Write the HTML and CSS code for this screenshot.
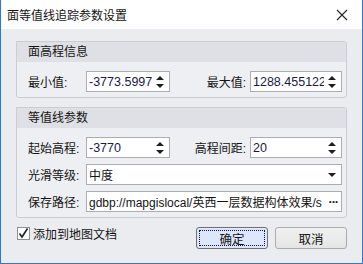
FILE: index.html
```html
<!doctype html>
<html>
<head>
<meta charset="utf-8">
<title>面等值线追踪参数设置</title>
<link rel="stylesheet" href="styles.css">
</head>
<body>
<div class="window">
	<div class="titlebar">
		<span class="title">面等值线追踪参数设置</span>
		<svg class="close" width="12" height="12" viewBox="0 0 12 12"><path d="M1 1L11 11M11 1L1 11" stroke="#222" stroke-width="1.1" fill="none"/></svg>
	</div>
	<div class="content">
		<div class="group">
			<div class="groupHeader">面高程信息</div>
			<div class="groupBody">
				<label class="fieldLabel">最小值:</label>
				<div class="field spin"><span class="value">-3773.5997</span><span class="spinArrows"><i class="up"></i><i class="down"></i></span></div>
				<label class="fieldLabel right">最大值:</label>
				<div class="field spin"><span class="value">1288.455122</span><span class="spinArrows"><i class="up"></i><i class="down"></i></span></div>
			</div>
		</div>
		<div class="group">
			<div class="groupHeader">等值线参数</div>
			<div class="groupBody">
				<label class="fieldLabel">起始高程:</label>
				<div class="field spin"><span class="value">-3770</span><span class="spinArrows"><i class="up"></i><i class="down"></i></span></div>
				<label class="fieldLabel right">高程间距:</label>
				<div class="field spin"><span class="value">20</span><span class="spinArrows"><i class="up"></i><i class="down"></i></span></div>
				<label class="fieldLabel">光滑等级:</label>
				<div class="field wide combo"><span class="value">中度</span><i class="down"></i></div>
				<label class="fieldLabel">保存路径:</label>
				<div class="field wide path"><span class="value">gdbp://mapgislocal/英西一层数据构体效果/s</span><span class="more">···</span></div>
			</div>
		</div>
		<div class="footer">
			<div class="check">
				<svg width="13" height="13" viewBox="0 0 13 13"><rect x="0.5" y="0.5" width="12" height="12" fill="#fff" stroke="#8e8f8f"/><path d="M2.5 6.5L5 10L10.5 1.5" stroke="#222" stroke-width="1.6" fill="none"/></svg>
				<span>添加到地图文档</span>
			</div>
			<div class="buttons">
				<div class="button default"><span>确定</span></div>
				<div class="button"><span>取消</span></div>
			</div>
		</div>
	</div>
</div>
</body>
</html>
```

FILE: styles.css
```css
body {
	margin: 0;
	font-family: "Liberation Sans", "Noto Sans CJK SC", sans-serif;
	font-size: 12px;
	color: rgb(20,20,20);
}

.window {
	width: 361px;
	height: 263px;
	border: 1px solid rgb(43,121,208);
	border-top: none;
	background-color: rgb(235,236,240);
	display: flex;
	flex-direction: column;
}

.titlebar {
	height: 29px;
	background-color: rgb(255,255,255);
	display: flex;
	align-items: center;
	justify-content: space-between;
	padding: 0 14px 0 6px;
}

.title {
	font-size: 12px;
	padding-bottom: 1px;
}

.close {
	margin-top: 1px;
}

.content {
	padding: 12px 15px 0 15px;
	display: flex;
	flex-direction: column;
	gap: 9px;
}

.group {
	border: 1px solid rgb(204,205,210);
	border-radius: 0 3px 3px 3px;
	background-color: rgb(238,239,242);
}

.groupHeader {
	height: 20px;
	line-height: 20px;
	padding-left: 11px;
	background-color: rgb(223,224,229);
}

.groupBody {
	display: grid;
	grid-template-columns: 58px 84px 1fr 92px;
	row-gap: 6px;
	padding: 9px 4px 5px 11px;
	align-items: center;
}

.fieldLabel {
	white-space: nowrap;
}

.fieldLabel.right {
	text-align: right;
	padding-right: 4px;
}

.field {
	height: 19px;
	border: 1px solid rgb(171,173,179);
	background-color: rgb(255,255,255);
	display: flex;
	align-items: center;
	padding: 0 3px 0 2px;
	overflow: hidden;
	font-size: 12.5px;
	color: rgb(26,26,70);
}

.field .value {
	flex: 1;
	min-width: 0;
	margin-right: 4px;
	white-space: nowrap;
	overflow: hidden;
}

.field.wide {
	grid-column: 2 / 5;
}

.spinArrows {
	display: flex;
	flex-direction: column;
	gap: 4px;
	padding-right: 2px;
}

.up {
	width: 0;
	height: 0;
	border-left: 4px solid transparent;
	border-right: 4px solid transparent;
	border-bottom: 4px solid rgb(30,30,30);
}

.down {
	width: 0;
	height: 0;
	border-left: 4px solid transparent;
	border-right: 4px solid transparent;
	border-top: 4px solid rgb(30,30,30);
}

.combo .down {
	margin-right: 2px;
}

.combo .value {
	color: rgb(20,20,20);
	font-size: 12px;
}

.path .value {
	color: rgb(20,20,20);
	font-size: 12px;
	text-overflow: clip;
}

.more {
	font-weight: bold;
	padding-left: 2px;
	letter-spacing: -1px;
}

.footer {
	display: flex;
	justify-content: space-between;
	align-items: flex-start;
	padding-left: 1px;
}

.check {
	display: flex;
	align-items: center;
	gap: 3px;
	height: 13px;
}

.buttons {
	display: flex;
	gap: 7px;
}

.button {
	width: 72px;
	height: 22px;
	border: 1px solid rgb(172,172,172);
	border-radius: 3px;
	background: linear-gradient(rgb(240,240,240), rgb(229,229,229));
	display: flex;
	align-items: center;
	justify-content: center;
	font-size: 12.5px;
	box-sizing: border-box;
}

.button.default {
	background: rgb(220,230,252);
	border-color: rgb(112,112,112);
	padding: 2px;
}

.button.default span {
	flex: 1;
	align-self: stretch;
	display: flex;
	align-items: center;
	justify-content: center;
	border: 1px dotted rgb(20,20,20);
}
```
